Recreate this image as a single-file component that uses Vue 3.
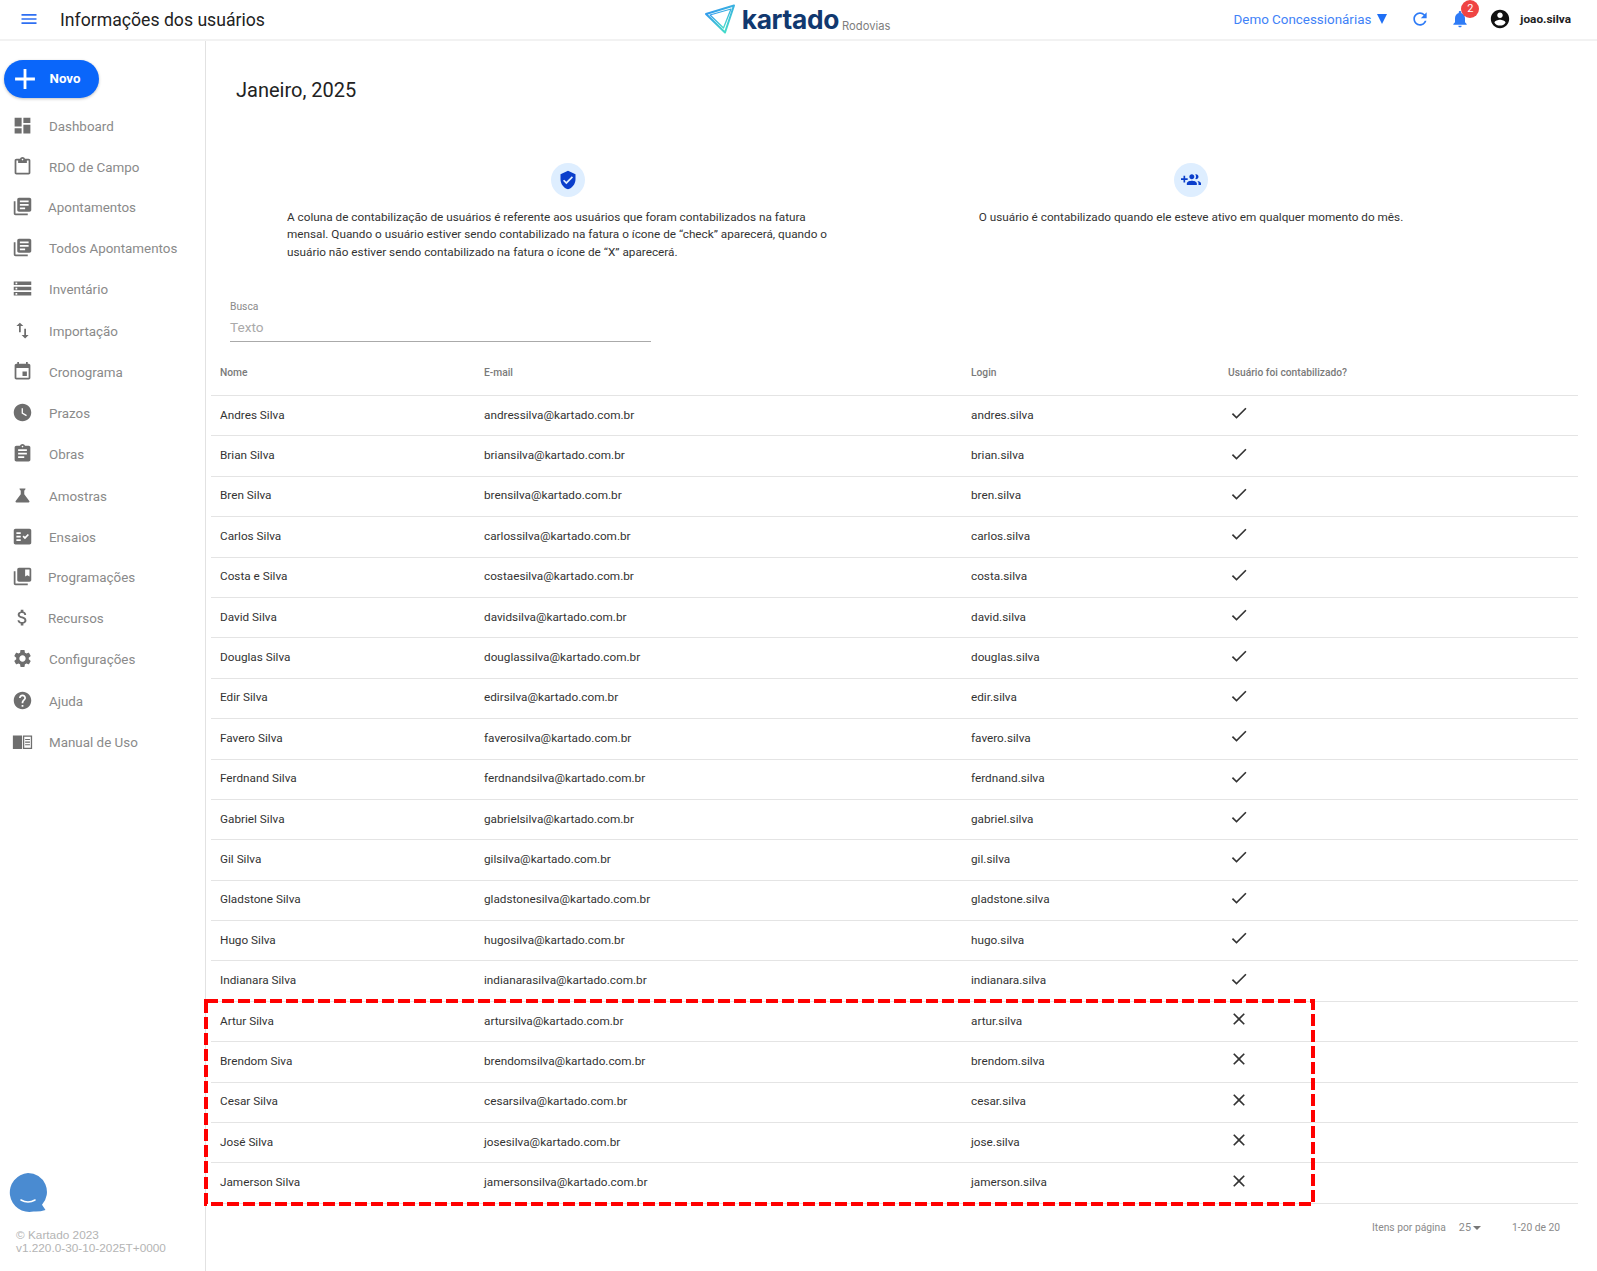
<script setup>
const I = {
  menu: 'M3 18h18v-2H3v2zm0-5h18v-2H3v2zm0-7v2h18V6H3z',
  dashboard: 'M3 13h8V3H3v10zm0 8h8v-6H3v6zm10 0h8V11h-8v10zm0-18v6h8V3h-8z',
  paste: 'M19 3h-4.18C14.4 1.84 13.3 1 12 1c-1.3 0-2.4.84-2.82 2H5c-1.1 0-2 .9-2 2v14c0 1.1.9 2 2 2h14c1.1 0 2-.9 2-2V5c0-1.1-.9-2-2-2zm-7 0c.55 0 1 .45 1 1s-.45 1-1 1-1-.45-1-1 .45-1 1-1zm7 16H5V5h2v3h10V5h2v14z',
  library: 'M4 6H2v14c0 1.1.9 2 2 2h14v-2H4V6zm16-4H8c-1.1 0-2 .9-2 2v12c0 1.1.9 2 2 2h12c1.1 0 2-.9 2-2V4c0-1.1-.9-2-2-2zm-1 9H9V9h10v2zm-4 4H9v-2h6v2zm4-8H9V5h10v2z',
  storage: 'M2 20h20v-4H2v4zm2-3h2v2H4v-2zM2 4v4h20V4H2zm4 3H4V5h2v2zm-4 7h20v-4H2v4zm2-3h2v2H4v-2z',
  importExport: 'M9 3L5 6.99h3V14h2V6.99h3L9 3zm7 14.01V10h-2v7.01h-3L15 21l4-3.99h-3z',
  event: 'M17 12h-5v5h5v-5zM16 1v2H8V1H6v2H5c-1.11 0-1.99.9-1.99 2L3 19c0 1.1.89 2 2 2h14c1.1 0 2-.9 2-2V5c0-1.1-.9-2-2-2h-1V1h-2zm3 18H5V8h14v11z',
  clock: 'M12 2C6.5 2 2 6.5 2 12s4.5 10 10 10 10-4.5 10-10S17.5 2 12 2zm4.2 14.2L11 13V7h1.5v5.2l4.500 2.700-.8 1.300z',
  assignment: 'M19 3h-4.18C14.4 1.84 13.3 1 12 1c-1.3 0-2.4.84-2.82 2H5c-1.1 0-2 .9-2 2v14c0 1.1.9 2 2 2h14c1.1 0 2-.9 2-2V5c0-1.1-.9-2-2-2zm-7 0c.55 0 1 .45 1 1s-.45 1-1 1-1-.45-1-1 .45-1 1-1zm2 14H7v-2h7v2zm3-4H7v-2h10v2zm0-4H7V7h10v2z',
  flask: 'M19.8 18.4L14 10.67V6.5l1.35-1.69c.26-.33.03-.81-.39-.81H9.04c-.42 0-.65.48-.39.81L10 6.5v4.17L4.2 18.4c-.49.66-.02 1.6.8 1.6h14c.82 0 1.29-.94.8-1.6z',
  fact: 'M20 3H4c-1.1 0-2 .9-2 2v14c0 1.1.9 2 2 2h16c1.1 0 2-.9 2-2V5c0-1.1-.9-2-2-2zM10 17H5v-2h5v2zm0-4H5v-2h5v2zm0-4H5V7h5v2zm4.82 6L12 12.16l1.41-1.41 1.41 1.42L17.99 9l1.42 1.42L14.82 15z',
  bookmark: 'M4 6H2v14c0 1.1.9 2 2 2h14v-2H4V6zM20 2H8c-1.1 0-2 .9-2 2v12c0 1.1.9 2 2 2h12c1.1 0 2-.9 2-2V4c0-1.1-.9-2-2-2zm0 10l-2.5-1.5L15 12V4h5v8z',
  money: 'M11.8 10.9c-2.27-.59-3-1.2-3-2.15 0-1.09 1.01-1.85 2.7-1.85 1.78 0 2.44.85 2.5 2.1h2.21c-.07-1.72-1.12-3.3-3.21-3.81V3h-3v2.16c-1.94.42-3.5 1.68-3.5 3.61 0 2.31 1.91 3.46 4.7 4.13 2.5.6 3 1.48 3 2.41 0 .69-.49 1.79-2.7 1.79-2.06 0-2.87-.92-2.98-2.1h-2.2c.12 2.19 1.76 3.42 3.68 3.83V21h3v-2.15c1.95-.37 3.5-1.5 3.5-3.55 0-2.84-2.43-3.81-4.7-4.4z',
  gear: 'M19.14 12.94c.04-.3.06-.61.06-.94 0-.32-.02-.64-.07-.94l2.03-1.58c.18-.14.23-.41.12-.61l-1.92-3.32c-.12-.22-.37-.29-.59-.22l-2.39.96c-.5-.38-1.03-.7-1.62-.94l-.36-2.54c-.04-.24-.24-.41-.48-.41h-3.84c-.24 0-.43.17-.47.41l-.36 2.54c-.59.24-1.13.57-1.62.94l-2.39-.96c-.22-.08-.47 0-.59.22L2.74 8.87c-.12.21-.08.47.12.61l2.03 1.58c-.05.3-.09.63-.09.94s.02.64.07.94l-2.03 1.58c-.18.14-.23.41-.12.61l1.92 3.32c.12.22.37.29.59.22l2.39-.96c.5.38 1.03.7 1.62.94l.36 2.54c.05.24.24.41.48.41h3.84c.24 0 .44-.17.47-.41l.36-2.54c.59-.24 1.13-.56 1.62-.94l2.39.96c.22.08.47 0 .59-.22l1.92-3.32c.12-.22.07-.47-.12-.61l-2.01-1.58zM12 15.6c-1.98 0-3.6-1.62-3.6-3.6s1.62-3.6 3.6-3.6 3.6 1.62 3.6 3.6-1.62 3.6-3.6 3.6z',
  help: 'M12 2C6.48 2 2 6.48 2 12s4.48 10 10 10 10-4.48 10-10S17.52 2 12 2zm1 17h-2v-2h2v2zm2.07-7.75l-.9.92C13.45 12.9 13 13.5 13 15h-2v-.5c0-1.1.45-2.1 1.17-2.83l1.24-1.26c.37-.36.59-.86.59-1.41 0-1.1-.9-2-2-2s-2 .9-2 2H8c0-2.21 1.79-4 4-4s4 1.79 4 4c0 .88-.36 1.68-.93 2.25z',
  book: 'M1 5h10.5v15.5H1zM12.5 5H23v15.5H12.5zM14 6.5V19h7.5V6.5zM15 9h5.5v1.3H15zM15 12h5.5v1.3H15zM15 15h5.5v1.3H15z',
  refresh: 'M17.65 6.35C16.2 4.9 14.21 4 12 4c-4.42 0-7.99 3.58-7.99 8s3.57 8 7.99 8c3.73 0 6.84-2.55 7.73-6h-2.08c-.82 2.33-3.04 4-5.65 4-3.31 0-6-2.69-6-6s2.69-6 6-6c1.66 0 3.14.69 4.22 1.78L13 11h7V4l-2.35 2.35z',
  bell: 'M12 22c1.1 0 2-.9 2-2h-4c0 1.1.9 2 2 2zm6-6v-5c0-3.07-1.63-5.64-4.5-6.32V4c0-.83-.67-1.5-1.5-1.5s-1.5.67-1.5 1.5v.68C7.64 5.36 6 7.92 6 11v5l-2 2v1h16v-1l-2-2z',
  account: 'M12 2C6.48 2 2 6.48 2 12s4.48 10 10 10 10-4.48 10-10S17.52 2 12 2zm0 3c1.66 0 3 1.34 3 3s-1.34 3-3 3-3-1.34-3-3 1.34-3 3-3zm0 14.2c-2.5 0-4.71-1.28-6-3.22.03-1.99 4-3.08 6-3.08 1.99 0 5.97 1.09 6 3.08-1.29 1.94-3.5 3.22-6 3.22z',
  shield: 'M12 1L3 5v6c0 5.55 3.84 10.74 9 12 5.16-1.26 9-6.45 9-12V5l-9-4zm-2 16l-4-4 1.41-1.41L10 14.17l6.59-6.59L18 9l-8 8z',
  group: 'M8 10H5V7H3v3H0v2h3v3h2v-3h3v-2zm10 1c1.66 0 2.99-1.34 2.99-3S19.66 5 18 5c-.32 0-.63.05-.91.14.57.81.9 1.79.9 2.86s-.34 2.04-.9 2.86c.28.09.59.14.91.14zm-5 0c1.66 0 2.99-1.34 2.99-3S14.66 5 13 5s-3 1.34-3 3 1.34 3 3 3zm6.62 2.16c.83.73 1.38 1.66 1.38 2.84v2h3v-2c0-1.54-2.37-2.49-4.38-2.84zM13 13c-2 0-6 1-6 3v2h12v-2c0-2-4-3-6-3z',
  check: 'M9 16.17L4.83 12l-1.42 1.41L9 19 21 7l-1.41-1.41z',
  close: 'M19 6.41L17.59 5 12 10.59 6.41 5 5 6.41 10.59 12 5 17.59 6.41 19 12 13.41 17.59 19 19 17.59 13.41 12z',
  plus: 'M19 13h-6v6h-2v-6H5v-2h6V5h2v6h6v2z'
}

const nav = [
  ['Dashboard', I.dashboard, 42], ['RDO de Campo', I.paste, 39.5], ['Apontamentos', I.library, 41, true],
  ['Todos Apontamentos', I.library, 41], ['Inventário', I.storage, 41.5], ['Importação', I.importExport, 41.5],
  ['Cronograma', I.event, 41], ['Prazos', I.clock, 41], ['Obras', I.assignment, 41.5],
  ['Amostras', I.flask, 42], ['Ensaios', I.fact, 39.5], ['Programações', I.bookmark, 40.5, true],
  ['Recursos', I.money, 41.5, true], ['Configurações', I.gear, 41.5], ['Ajuda', I.help, 41], ['Manual de Uso', I.book, 41]
].map(([label, d, h, tight]) => ({ label, d, h, tight }))

const people = [
  ['Andres Silva', 'andressilva', 'andres.silva', 1], ['Brian Silva', 'briansilva', 'brian.silva', 1],
  ['Bren Silva', 'brensilva', 'bren.silva', 1], ['Carlos Silva', 'carlossilva', 'carlos.silva', 1],
  ['Costa e Silva', 'costaesilva', 'costa.silva', 1], ['David Silva', 'davidsilva', 'david.silva', 1],
  ['Douglas Silva', 'douglassilva', 'douglas.silva', 1], ['Edir Silva', 'edirsilva', 'edir.silva', 1],
  ['Favero Silva', 'faverosilva', 'favero.silva', 1], ['Ferdnand Silva', 'ferdnandsilva', 'ferdnand.silva', 1],
  ['Gabriel Silva', 'gabrielsilva', 'gabriel.silva', 1], ['Gil Silva', 'gilsilva', 'gil.silva', 1],
  ['Gladstone Silva', 'gladstonesilva', 'gladstone.silva', 1], ['Hugo Silva', 'hugosilva', 'hugo.silva', 1],
  ['Indianara Silva', 'indianarasilva', 'indianara.silva', 1], ['Artur Silva', 'artursilva', 'artur.silva', 0],
  ['Brendom Siva', 'brendomsilva', 'brendom.silva', 0], ['Cesar Silva', 'cesarsilva', 'cesar.silva', 0],
  ['José Silva', 'josesilva', 'jose.silva', 0], ['Jamerson Silva', 'jamersonsilva', 'jamerson.silva', 0]
]
</script>

<template>
  <div class="page">
    <header class="topbar">
      <div class="top-left">
        <svg class="menu-icon" viewBox="0 0 24 24"><path :d="I.menu" /></svg>
        <span class="page-title">Informações dos usuários</span>
      </div>
      <div class="logo">
        <svg class="logo-mark" viewBox="0 0 32 30">
          <defs>
            <linearGradient id="lg" x1="0" y1="0" x2="0.7" y2="1">
              <stop offset="0" stop-color="#2f8cf5" />
              <stop offset="1" stop-color="#45dcc8" />
            </linearGradient>
          </defs>
          <path d="M30 1.5 2 10l19 18.5z" fill="none" stroke="url(#lg)" stroke-width="2" stroke-linejoin="round" />
          <path d="M27 5 6 11 19.5 24z" fill="none" stroke="url(#lg)" stroke-width="1.3" stroke-linejoin="round" />
        </svg>
        <span class="logo-word">kartado</span>
        <span class="logo-sub">Rodovias</span>
      </div>
      <div class="top-right">
        <span class="company">Demo Concessionárias</span>
        <span class="caret-big"></span>
        <svg class="top-icon refresh" viewBox="0 0 24 24"><path :d="I.refresh" /></svg>
        <span class="bell-wrap">
          <svg class="top-icon" viewBox="0 0 24 24"><path :d="I.bell" /></svg>
          <span class="badge">2</span>
        </span>
        <svg class="account" viewBox="0 0 24 24"><path :d="I.account" /></svg>
        <span class="user">joao.silva</span>
      </div>
    </header>

    <div class="body">
      <aside class="sidebar">
        <button class="novo">
          <svg viewBox="0 0 24 24"><path :d="I.plus" /></svg>
          <span>Novo</span>
        </button>
        <nav class="nav">
          <div v-for="n in nav" :key="n.label" class="nav-item" :class="{ tight: n.tight }" :style="{ height: n.h + 'px' }">
            <svg viewBox="0 0 24 24"><path :d="n.d" /></svg>
            <span>{{ n.label }}</span>
          </div>
        </nav>
        <div class="side-foot">
          <svg class="chat" viewBox="0 0 38 40">
            <path d="M19 0a19 19 0 0 1 14 31.800l3.500 5.200q-6 2-12 1.500A19.500 19.500 0 1 1 19 0z" fill="#4a8bd1" />
            <path d="M12 27q7 4 14 0" fill="none" stroke="#fff" stroke-width="1.600" stroke-linecap="round" />
          </svg>
          <div class="copy">© Kartado 2023<br />v1.220.0-30-10-2025T+0000</div>
        </div>
      </aside>

      <main class="main">
        <h1 class="month">Janeiro, 2025</h1>
        <section class="info">
          <div class="info-col">
            <span class="info-icon"><svg class="shield" viewBox="0 0 24 24"><path :d="I.shield" /></svg></span>
            <p class="left">A coluna de contabilização de usuários é referente aos usuários que foram contabilizados na fatura mensal. Quando o usuário estiver sendo contabilizado na fatura o ícone de “check” aparecerá, quando o usuário não estiver sendo contabilizado na fatura o ícone de “X” aparecerá.</p>
          </div>
          <div class="info-col">
            <span class="info-icon"><svg class="group" viewBox="0 0 24 24"><path :d="I.group" /></svg></span>
            <p>O usuário é contabilizado quando ele esteve ativo em qualquer momento do mês.</p>
          </div>
        </section>

        <div class="search">
          <label>Busca</label>
          <div class="search-input">Texto</div>
        </div>

        <div class="table">
          <div class="row head">
            <span>Nome</span><span>E-mail</span><span>Login</span><span>Usuário foi contabilizado?</span>
          </div>
          <div v-for="p in people" :key="p[1]" class="row body-row">
            <span>{{ p[0] }}</span>
            <span>{{ p[1] }}@kartado.com.br</span>
            <span>{{ p[2] }}</span>
            <span><svg class="mark" viewBox="0 0 24 24"><path :d="p[3] ? I.check : I.close" /></svg></span>
          </div>
          <svg class="highlight" width="1111" height="207" viewBox="0 0 1111 207">
            <rect x="2" y="2" width="1107" height="203" fill="none" stroke="#ff0000" stroke-width="4" stroke-dasharray="12 4" />
          </svg>
        </div>

        <div class="pager">
          <span class="per">Itens por página</span>
          <span class="size">25</span>
          <span class="caret"></span>
          <span class="range">1-20 de 20</span>
        </div>
      </main>
    </div>
  </div>
</template>

<style>
html, body { margin: 0; background: #fff; }
</style>

<style scoped>
.page {
  width: 1597px;
  height: 1271px;
  overflow: hidden;
  display: flex;
  flex-direction: column;
  font-family: Roboto, "Liberation Sans", sans-serif;
  color: #333;
  background: #fff;
}
.topbar {
  height: 38px;
  padding-bottom: 1px;
  border-bottom: 2px solid #f2f2f2;
  display: grid;
  grid-template-columns: 1fr auto 1fr;
  align-items: center;
  flex: none;
}
.top-left { display: flex; align-items: center; }
.menu-icon { width: 20px; height: 20px; margin-left: 19px; fill: #2e6ff2; }
.page-title { margin-left: 21px; margin-top: 1px; font-size: 17.650px; color: #222; }
.logo { display: flex; align-items: flex-end; margin-left: -1px; margin-right: 2px; }
.logo-mark { width: 32px; height: 30px; margin-right: 6px; }
.logo-word { font-family: Inter, sans-serif; font-weight: 700; font-size: 26.300px; line-height: 30px; color: #11386f; letter-spacing: -0.3px; margin-bottom: -1px; }
.logo-sub { font-family: Inter, sans-serif; font-size: 11.200px; color: #7d7d7d; margin-left: 3px; line-height: 20px; margin-bottom: -2px; }
.top-right { display: flex; align-items: center; justify-content: flex-end; padding-right: 26px; }
.company { font-size: 13.400px; color: #3f82f7; }
.caret-big {
  width: 0; height: 0; margin-left: 6px;
  border-left: 5.500px solid transparent; border-right: 5.500px solid transparent; border-top: 10px solid #1f6ff5;
}
.top-icon { width: 20px; height: 20px; fill: #2e7bf6; display: block; }
.refresh { margin-left: 23px; }
.bell-wrap { position: relative; margin-left: 20px; display: block; }
.badge {
  position: absolute; left: 11px; top: -9px; width: 18px; height: 18px; border-radius: 50%;
  background: #ef4444; color: #fff; font-size: 11px; line-height: 18px; text-align: center;
}
.account { width: 22px; height: 22px; margin-left: 19px; fill: #111; }
.user { font-size: 11.800px; font-weight: 700; color: #222; margin-left: 9px; }

.body { flex: 1; display: flex; min-height: 0; }
.sidebar {
  width: 205px; flex: none; border-right: 1px solid #e2e2e2;
  display: flex; flex-direction: column; position: relative;
}
.novo {
  margin: 19px 0 0 4px; width: 95px; height: 38px; border: none; border-radius: 19px;
  background: #0a66fa; color: #fff; font: 700 13.300px Roboto, sans-serif;
  display: flex; align-items: center; padding: 0 0 2px 3.500px;
  box-shadow: 0 1px 3px rgba(0,0,0,.25);
}
.novo svg { width: 34px; height: 34px; fill: #fff; margin-right: 8px; margin-top: 2px; flex: none; }
.nav { margin-top: 7.500px; }
.nav-item { display: flex; align-items: center; padding-left: 12px; color: #8a8a8a; font-size: 13.400px; }
.nav-item svg { width: 21px; height: 21px; fill: #6e6e6e; margin-right: 16px; flex: none; margin-top: -2px; }
.nav-item.tight svg { margin-right: 15px; }
.side-foot { margin-top: auto; padding: 0 0 16.500px 0; }
.chat { display: block; width: 38px; height: 40px; margin-left: 8.500px; }
.copy { margin: 15.500px 0 0 16px; font: 11.800px/13px "Liberation Sans", Arial, sans-serif; color: #b4b4b4; }

.main { flex: 1; min-width: 0; padding: 0 19px 0 5px; }
.month { margin: 37px 0 0 25px; font-size: 20px; line-height: 24px; font-weight: 400; color: #222; }
.info { margin: 61px 0 0 76px; display: grid; grid-template-columns: 562px 562px; column-gap: 61px; height: 122px; }
.info-col { display: flex; flex-direction: column; align-items: center; }
.info-icon {
  width: 34px; height: 34px; border-radius: 50%; background: #deeeff;
  display: flex; align-items: center; justify-content: center; flex: none;
}
.shield { width: 20px; height: 20px; fill: #0a3ecb; }
.group { width: 20px; height: 20px; fill: #0a3ecb; }
.info-col p { margin: 12px 0 0; font-size: 11.750px; line-height: 17.300px; color: #333; text-align: center; white-space: nowrap; }
.info-col p.left { white-space: normal; text-align: left; width: 550px; align-self: flex-start; }
.search { margin: 16px 0 0 19px; width: 421px; }
.search label { display: block; font-size: 10.300px; line-height: 12px; color: #8a8a8a; }
.search-input { margin-top: 5px; height: 23px; line-height: 18px; font-size: 13.600px; color: #aaa; border-bottom: 1px solid #aaa; }

.table { position: relative; margin-top: 7px; }
.row {
  display: grid; grid-template-columns: 264px 487px 257px 1fr;
  height: 40.400px; box-sizing: border-box; border-bottom: 1px solid #e4e4e4;
  align-items: center; font-size: 11.760px; color: #333;
}
.row > span { padding-left: 9px; white-space: nowrap; }
.body-row > span { padding-bottom: 2px; }
.row.head { height: 47px; font-size: 10.250px; font-weight: 500; color: #7a7a7a; }
.mark { display: block; width: 20px; height: 20px; fill: #333; margin-top: -3px; margin-left: 0.500px; }
.highlight { position: absolute; left: -7px; top: 650px; pointer-events: none; }

.pager { display: flex; align-items: center; height: 48px; font-size: 10.300px; color: #8a8a8a; padding-left: 1161px; }
.size { margin-left: 13px; font-size: 10.800px; }
.caret { width: 0; height: 0; margin-left: 2px; border-left: 4px solid transparent; border-right: 4px solid transparent; border-top: 4px solid #777; }
.range { margin-left: 31px; }
</style>
